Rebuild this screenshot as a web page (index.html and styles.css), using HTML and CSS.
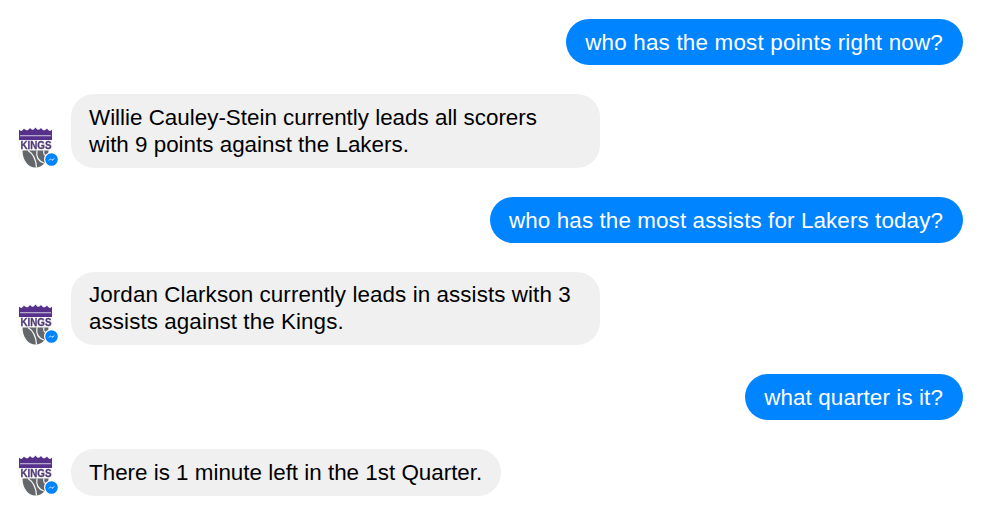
FILE: index.html
```html
<!DOCTYPE html>
<html lang="en">
<head>
<meta charset="utf-8">
<title>Chat</title>
<link rel="stylesheet" href="styles.css">
</head>
<body>
<svg class="defs" width="0" height="0" aria-hidden="true">
  <defs>
    <symbol id="kings" viewBox="0 0 35 42">
      <circle cx="17.500" cy="21" r="20" fill="#fafaf9"/>
      <path d="M1 14V3.500C2.500 5.500 4 5.500 6 2.500C8 5 10 5 12 2C14 4.500 15.500 4.500 17.500 1.500C19.500 4.500 21 4.500 23 2C25 5 27 5 29 2.500C31 5.500 32.500 5.500 34 3.500V14Z" fill="#56308a"/>
      <rect x="2" y="9" width="31" height="1.300" fill="#b3a6ca"/>
      <text x="18" y="23.400" text-anchor="middle" class="kings-word" textLength="31" lengthAdjust="spacingAndGlyphs">KINGS</text>
      <path d="M4.500 24.500H30.500C30.500 34 25 41.500 17.500 41.500C10 41.500 4.500 34 4.500 24.500Z" fill="#63666a"/>
      <path d="M10 24.500C14 27 18 33 18.500 41.500M19 24.500C18 30 20 35 26 37M26 24.500C25 27 26 30 30 31" fill="none" stroke="#fafaf9" stroke-width="1.200"/>
    </symbol>
    <symbol id="badge" viewBox="0 0 15 15">
      <circle cx="7.500" cy="7.500" r="7.500" fill="#fff"/>
      <circle cx="7.500" cy="7.500" r="6.300" fill="#0084ff"/>
      <path d="M3.800 9.300L6.500 6.400L8 7.800L11.200 5.700L8.400 8.700L6.900 7.300Z" fill="#fff"/>
    </symbol>
  </defs>
</svg>
<main class="chat">
  <div class="row row-out"><div class="bubble bubble-out loose">who has the most points right now?</div></div>
  <div class="row row-in">
    <div class="avatar"><svg class="logo"><use href="#kings"/></svg><svg class="badge"><use href="#badge"/></svg></div>
    <div class="bubble bubble-in wide">Willie Cauley-Stein currently leads all scorers<br>with 9 points against the Lakers.</div>
  </div>
  <div class="row row-out"><div class="bubble bubble-out">who has the most assists for Lakers today?</div></div>
  <div class="row row-in">
    <div class="avatar"><svg class="logo"><use href="#kings"/></svg><svg class="badge"><use href="#badge"/></svg></div>
    <div class="bubble bubble-in wide airy">Jordan Clarkson currently leads in assists with 3<br>assists against the Kings.</div>
  </div>
  <div class="row row-out"><div class="bubble bubble-out">what quarter is it?</div></div>
  <div class="row row-in">
    <div class="avatar"><svg class="logo"><use href="#kings"/></svg><svg class="badge"><use href="#badge"/></svg></div>
    <div class="bubble bubble-in">There is 1 minute left in the 1st Quarter.</div>
  </div>
</main>
</body>
</html>
```
FILE: styles.css
```css
html, body {
  margin: 0;
  padding: 0;
  background: #fff;
}
.defs {
  position: absolute;
}
.chat {
  display: flex;
  flex-direction: column;
  gap: 29px;
  box-sizing: border-box;
  width: 1000px;
  padding: 19px 37px 0 18px;
  font-family: "Liberation Sans", Arial, sans-serif;
  font-size: 22.4px;
  line-height: 27px;
}
.row {
  display: flex;
}
.row-out {
  justify-content: flex-end;
}
.row-in {
  align-items: flex-end;
  gap: 10px;
}
.bubble {
  box-sizing: border-box;
  padding: 10px 19px 9.3px 18px;
  border-radius: 23px;
  white-space: nowrap;
}
.bubble-out {
  padding-left: 19px;
  padding-right: 20px;
  background: #0084ff;
  color: #fff;
  letter-spacing: 0.11px;
}
.loose {
  letter-spacing: 0.2px;
}
.bubble-in {
  padding-top: 9.5px;
  padding-bottom: 9.8px;
  background: #f0f0f0;
  color: #000;
}
.wide {
  width: 529px;
}
.airy {
  letter-spacing: 0.08px;
}
.avatar {
  position: relative;
  flex: none;
  width: 43px;
  height: 42px;
}
.logo {
  display: block;
  width: 35px;
  height: 42px;
  filter: blur(0.4px);
}
.badge {
  position: absolute;
  left: 26px;
  top: 26px;
  width: 15px;
  height: 15px;
}
.kings-word {
  font-family: "Liberation Sans", Arial, sans-serif;
  font-size: 11.5px;
  font-weight: 700;
  fill: #4f3a78;
  stroke: #4f3a78;
  stroke-width: 0.3px;
}
```
